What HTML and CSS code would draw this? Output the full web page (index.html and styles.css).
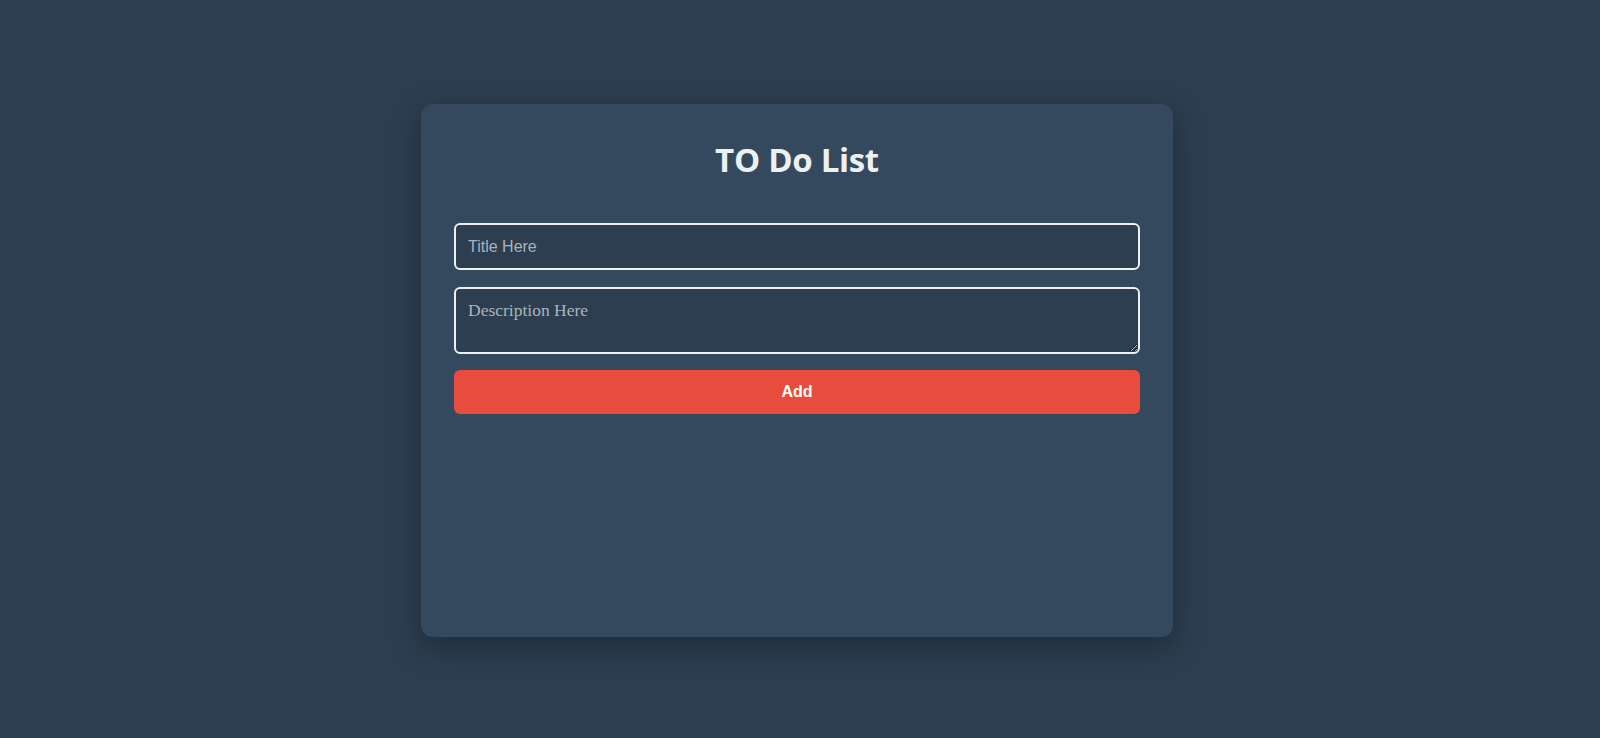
FILE: index.html
```html
<!DOCTYPE html>
<html lang="en">
<head>
<meta charset="utf-8">
<title>TO Do List</title>
<link rel="stylesheet" href="styles.css">
</head>
<body>
<main class="card">
  <h1 class="title">TO Do List</h1>
  <form class="form">
    <input class="field" type="text" placeholder="Title Here">
    <textarea class="field area" placeholder="Description Here"></textarea>
    <button class="add" type="button">Add</button>
  </form>
</main>
</body>
</html>
```

FILE: styles.css
```css
html, body {
  margin: 0;
  padding: 0;
  background: #2c3e50;
  height: 100%;
}
body {
  display: flex;
  align-items: flex-start;
  padding-top: 104px;
  box-sizing: border-box;
  overflow: hidden;
}
.card {
  box-sizing: border-box;
  width: 752px;
  height: 533px;
  margin-left: 421px;
  padding: 34px 33px;
  background: #34495e;
  border-radius: 12px;
  box-shadow: 0 10px 30px rgba(0, 0, 0, 0.3);
}
.title {
  margin: 0 0 41px;
  text-align: center;
  font-family: "Open Sans", "Noto Sans", sans-serif;
  font-weight: 700;
  font-size: 33px;
  line-height: 44px;
  color: #ecf0f1;
  letter-spacing: -0.3px;
}
.form {
  display: flex;
  flex-direction: column;
  gap: 17px;
}
.field {
  box-sizing: border-box;
  width: 100%;
  height: 47px;
  margin: 0;
  padding: 0 12px;
  background: #2c3e50;
  border: 2px solid #ecf0f1;
  border-radius: 6px;
  color: #ecf0f1;
  font-family: "Liberation Sans", Arial, sans-serif;
  font-size: 16px;
  outline: none;
}
.field::placeholder {
  color: #a9b4bd;
}
.area {
  height: 67px;
  padding: 11px 12px;
  font-family: "Liberation Serif", serif;
  font-size: 17.5px;
  resize: vertical;
}
.add {
  box-sizing: border-box;
  height: 44px;
  margin-top: -1px;
  border: none;
  border-radius: 6px;
  background: #e74c3c;
  color: #ffffff;
  font-family: "Liberation Sans", Arial, sans-serif;
  font-weight: 700;
  font-size: 16px;
  cursor: pointer;
}
```
